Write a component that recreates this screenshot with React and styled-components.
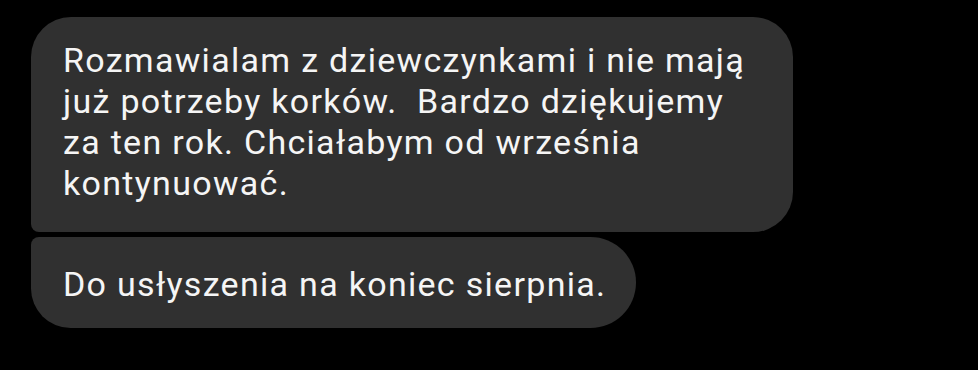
import React from 'react';
import styled, { createGlobalStyle } from 'styled-components';

const GlobalStyle = createGlobalStyle`
  html, body {
    margin: 0;
    padding: 0;
    background: #000000;
  }
`;

const Thread = styled.div`
  display: flex;
  flex-direction: column;
  align-items: flex-start;
  gap: 5px;
  width: 978px;
  height: 370px;
  box-sizing: border-box;
  padding: 17px 0 0 31px;
  background: #000000;
  font-family: Roboto, "Noto Sans", "Liberation Sans", sans-serif;
`;

// dymek wiadomości
const Bubble = styled.div`
  box-sizing: border-box;
  background: #303030;
  color: #f5f5f5;
  font-size: 34px;
  line-height: 41px;
  letter-spacing: 1.3px;
  padding: ${p => p.$pad};
  border-radius: ${p => p.$radius};
  width: ${p => p.$width || 'auto'};
  white-space: pre;
`;

const Line = styled.span`
  display: block;
`;

const lines = [
  'Rozmawialam z dziewczynkami i nie mają',
  'już potrzeby korków.  Bardzo dziękujemy',
  'za ten rok. Chciałabym od września',
  'kontynuować.',
];

export default function App() {
  return (
    <>
      <GlobalStyle />
      <Thread>
        <Bubble $width="762px" $pad="23px 32px 28px 32px" $radius="40px 40px 40px 8px">
          {lines.map((l, i) => (
            <Line key={i}>{l}</Line>
          ))}
        </Bubble>
        <Bubble $pad="27px 30px 23px 32px" $radius="8px 46px 46px 40px">
          <Line>Do usłyszenia na koniec sierpnia.</Line>
        </Bubble>
      </Thread>
    </>
  );
}
